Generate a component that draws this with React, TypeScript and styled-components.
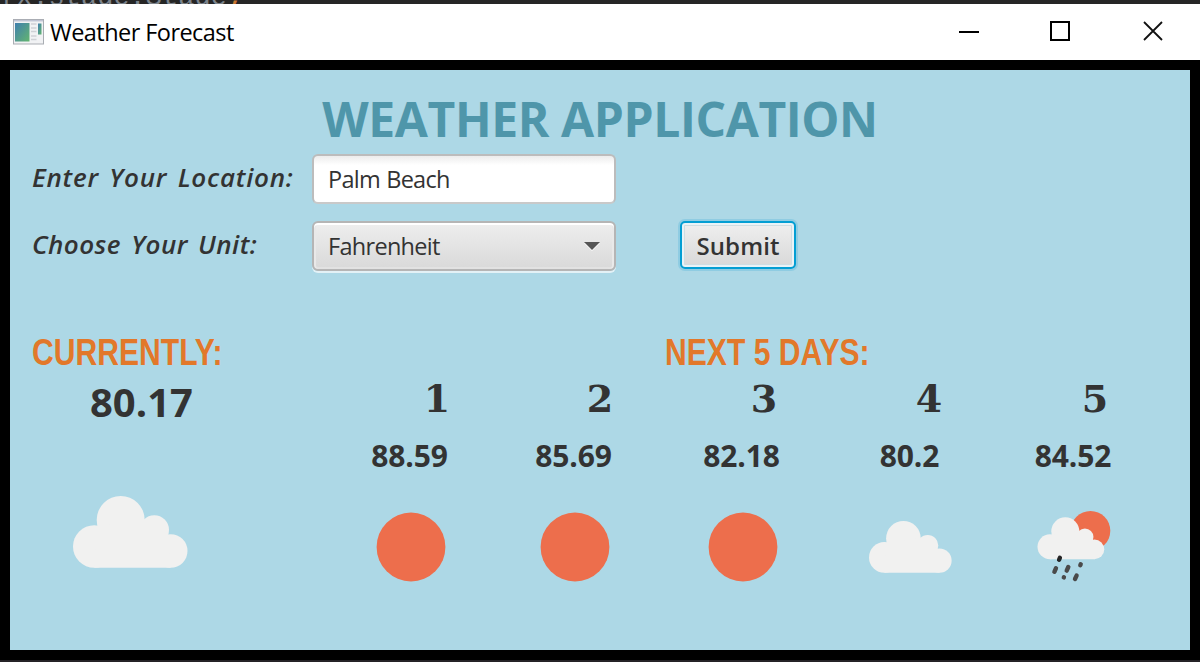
import React from "react";
import styled, { createGlobalStyle } from "styled-components";

const ui = `"Open Sans", "Noto Sans", sans-serif`;

const GlobalStyle = createGlobalStyle`
  * { box-sizing: border-box; }
  body { margin: 0; background: #000; overflow: hidden; }
`;

const Screen = styled.div`
  width: 1200px;
  height: 662px;
  display: flex;
  flex-direction: column;
  background: #000;
  border-bottom: 2px solid #252326;
  overflow: hidden;
`;

const EditorStrip = styled.div`
  height: 4px;
  flex: none;
  overflow: hidden;
  background: #262626;
  color: #7d848c;
  font: 27px/30px "Liberation Mono", monospace;
  white-space: pre;
  display: flex;
  align-items: flex-end;
`;

const EditorLine = styled.span`
  flex: none;
  height: 30px;
  margin-bottom: -9px;
  em { font-style: normal; color: #cc7832; }
`;

const TitleBar = styled.header`
  height: 56px;
  flex: none;
  display: flex;
  align-items: center;
  background: #fff;
  padding: 0 36px 0 13px;
`;

const WindowTitle = styled.span`
  flex: 1;
  margin-left: 6px;
  font: 23.5px/32px ${ui};
  letter-spacing: -0.55px;
  color: #000;
`;

const WindowButtons = styled.div`
  display: grid;
  grid-template-columns: 91px 93px 22px;
  padding-bottom: 2px;
`;

const Content = styled.main`
  width: 1180px;
  height: 580px;
  margin: 10px;
  flex: none;
  background: #add8e6;
  color: #333;
  padding-top: 17px;
`;

const Heading = styled.h1`
  margin: 0 0 3px;
  text-align: center;
  font: 700 48px/64px ${ui};
  letter-spacing: -0.4px;
  color: #4f96aa;
`;

const FormRow = styled.div<{ $gap?: number }>`
  display: flex;
  align-items: center;
  height: 50px;
  margin-top: ${(p) => p.$gap ?? 0}px;
  padding-left: 22px;
`;

const Label = styled.label<{ $spacing: number }>`
  width: 280px;
  flex: none;
  font: italic 600 26px/34px ${ui};
  letter-spacing: ${(p) => p.$spacing}px;
  word-spacing: 3px;
  padding-bottom: 5px;
  white-space: nowrap;
`;

const TextField = styled.div`
  width: 304px;
  height: 50px;
  border: 2px solid #bcbcbc;
  border-bottom-color: #c9c9c9;
  border-radius: 6px;
  background: linear-gradient(#ececec, #fff 9px);
  padding: 0 14px;
  font: 23.5px/46px ${ui};
  letter-spacing: -0.75px;
  word-spacing: 1px;
`;

const Select = styled.div`
  width: 304px;
  height: 50px;
  display: flex;
  align-items: center;
  justify-content: space-between;
  border: 2px solid #b5b5b5;
  border-radius: 6px;
  background: linear-gradient(#eeeeee, #d9d9d9);
  box-shadow: inset 0 2px #fff, inset 2px 0 #e9e9e9, inset -2px 0 #e9e9e9, inset 0 -2px #e2e2e2, 0 2px #e3f1f6;
  padding: 0 14px;
  font: 23.5px/46px ${ui};
  letter-spacing: -0.7px;
`;

const Submit = styled.button`
  width: 116px;
  height: 48px;
  margin: 0 0 2px 64px;
  padding: 1px 0 0;
  border: 2px solid #039ed3;
  border-radius: 5px;
  background: linear-gradient(#efefef, #d8d8d8);
  box-shadow: 0 0 0 2px #7fc6e0aa, inset 0 0 0 2px #e9f3f7, inset 0 0 0 3px #cfdde2;
  color: #333;
  font: 600 24px/40px ${ui};
  letter-spacing: 0.1px;
`;

const Weather = styled.div`
  display: flex;
  padding: 54px 0 0 22px;
`;

const Current = styled.section`
  width: 304px;
  flex: none;
  display: flex;
  flex-direction: column;
`;

const SectionTitle = styled.h2<{ $indent?: number }>`
  margin: 0 0 0 ${(p) => p.$indent ?? 0}px;
  font: 700 36px/56px "Liberation Sans", sans-serif;
  color: #e2782a;
  white-space: nowrap;
  transform: scaleX(0.836);
  transform-origin: left;
`;

const CurrentTemp = styled.div`
  margin: -7px 0 0 58px;
  font: 700 40px/56px ${ui};
`;

const CurrentIcon = styled.div`
  margin: 66px 0 0 41px;
  line-height: 0;
`;

const Forecast = styled.section`
  flex: 1;
`;

const Days = styled.div`
  display: grid;
  grid-template-columns: 150px 178px 158px 178px 149px;
`;

const Day = styled.div`
  display: flex;
  flex-direction: column;
  align-items: center;
`;

const DayNumber = styled.div<{ $shift: number }>`
  height: 46px;
  margin-left: ${(p) => p.$shift}px;
  margin-top: -5px;
  font: 700 38px/46px "DejaVu Serif", serif;
`;

const DayTemp = styled.div`
  height: 42px;
  margin: 13px 3px 0 0;
  font: 700 30px/42px ${ui};
  letter-spacing: -0.1px;
`;

const DayIcon = styled.div`
  height: 90px;
  margin: 25px 1px 0 0;
  display: flex;
  align-items: center;
`;

const AppIcon = () => (
  <svg width="31" height="26" viewBox="0 0 31 26">
    <defs>
      <linearGradient id="pane" x1="0" y1="0" x2="1" y2="1">
        <stop offset="0" stopColor="#3f7fae" />
        <stop offset="1" stopColor="#63b56f" />
      </linearGradient>
    </defs>
    <rect x=".5" y=".5" width="30" height="24.5" fill="#f1f2f4" stroke="#a9adb3" />
    <path d="M1 1.7h29" stroke="#c0c4d4" strokeWidth="1.5" />
    <rect x="2" y="4" width="14.5" height="18.5" fill="url(#pane)" />
    <path d="M18 5h5.500M18 9h5.500M18 12.500h5.500M18 17h5.500M18 20.500h5.500" stroke="#cfd1d6" strokeWidth="1.300" />
    <rect x="25" y="4.500" width="3.500" height="11" fill="url(#pane)" />
  </svg>
);

const CloudShape = () => (
  <g fill="#f1f1f0">
    <circle cx="21.300" cy="50.500" r="21.300" />
    <circle cx="47.700" cy="24" r="24" />
    <circle cx="81.300" cy="34" r="14.700" />
    <circle cx="97.700" cy="55" r="16.800" />
    <path d="M24 30L71 23.500L95 38.500L97.700 71.800H21.300Z" />
  </g>
);

const Cloud = ({ width }: { width: number }) => (
  <svg width={width} height={(width * 72) / 115} viewBox="0 0 115 72">
    <CloudShape />
  </svg>
);

const Sun = () => (
  <svg width="70" height="70" viewBox="0 0 70 70">
    <circle cx="35" cy="35" r="34.400" fill="#ed6e4c" />
  </svg>
);

const SunShower = () => (
  <svg width="74" height="72" viewBox="0 0 74 72">
    <circle cx="53.500" cy="19.800" r="19.800" fill="#ed6e4c" />
    <g transform="translate(.5 6.300) scale(.583)">
      <CloudShape />
    </g>
    <g stroke="#4a4a4a" strokeWidth="4.400" strokeLinecap="round">
      <path d="M22.900 46.800l-.8 2" stroke="#252525" />
      <path d="M19 57.200l-1.600 3.600M31.300 56l-1.600 3.600M43.700 53.200l-.4 1M26.900 66.200l-.1.200M39.600 64.600l-1.600 3.400" />
    </g>
  </svg>
);

const icons = { sun: <Sun />, cloud: <Cloud width={83} />, shower: <SunShower /> };

const days: { temp: string; icon: keyof typeof icons; shift: number }[] = [
  { temp: "88.59", icon: "sun", shift: 52 },
  { temp: "85.69", icon: "sun", shift: 50 },
  { temp: "82.18", icon: "sun", shift: 42 },
  { temp: "80.2", icon: "cloud", shift: 36 },
  { temp: "84.52", icon: "shower", shift: 41 },
];

export default function App() {
  return (
    <Screen>
      <GlobalStyle />
      <EditorStrip>
        <EditorLine>fx.stage.Stage<em>;</em></EditorLine>
      </EditorStrip>
      <TitleBar>
        <AppIcon />
        <WindowTitle>Weather Forecast</WindowTitle>
        <WindowButtons>
          <svg width="22" height="22" fill="none" stroke="#000" strokeWidth="2"><path d="M1 12h20" /></svg>
          <svg width="22" height="22" fill="none" stroke="#000" strokeWidth="2"><path d="M2 2h18v18H2z" /></svg>
          <svg width="22" height="22" fill="none" stroke="#111" strokeWidth="1.800"><path d="M2 2l18 18M20 2L2 20" /></svg>
        </WindowButtons>
      </TitleBar>
      <Content>
        <Heading>WEATHER APPLICATION</Heading>
        <FormRow>
          <Label $spacing={0.75}>Enter Your Location:</Label>
          <TextField>Palm Beach</TextField>
        </FormRow>
        <FormRow $gap={17}>
          <Label $spacing={0.45}>Choose Your Unit:</Label>
          <Select>
            Fahrenheit
            <svg width="16" height="10" viewBox="0 0 16 10">
              <path d="M0 2h16l-8 8z" fill="#fff" />
              <path d="M0 1h16l-8 8z" fill="#555" />
            </svg>
          </Select>
          <Submit>Submit</Submit>
        </FormRow>
        <Weather>
          <Current>
            <SectionTitle>CURRENTLY:</SectionTitle>
            <CurrentTemp>80.17</CurrentTemp>
            <CurrentIcon><Cloud width={115} /></CurrentIcon>
          </Current>
          <Forecast>
            <SectionTitle $indent={329}>NEXT 5 DAYS:</SectionTitle>
            <Days>
              {days.map((d, i) => (
                <Day key={i}>
                  <DayNumber $shift={d.shift}>{i + 1}</DayNumber>
                  <DayTemp>{d.temp}</DayTemp>
                  <DayIcon>{icons[d.icon]}</DayIcon>
                </Day>
              ))}
            </Days>
          </Forecast>
        </Weather>
      </Content>
    </Screen>
  );
}
